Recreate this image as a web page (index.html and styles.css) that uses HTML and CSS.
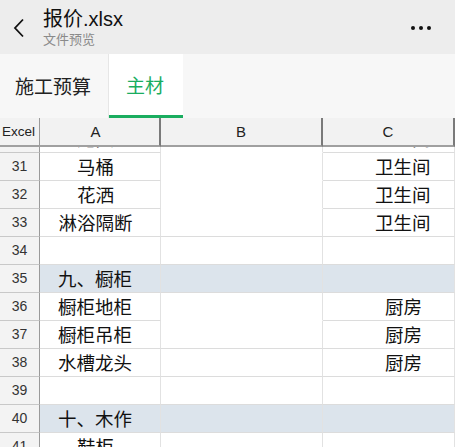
FILE: index.html
```html
<!DOCTYPE html>
<html lang="zh-CN">

<head>
    <meta charset="UTF-8">
    <meta name="viewport" content="width=device-width, initial-scale=1.0">
    <title>报价.xlsx</title>
    <link rel="stylesheet" href="styles.css">
</head>

<body>

    <!-- Top bar -->
    <header class="topbar">
        <svg class="back" width="12" height="20" viewBox="0 0 12 20">
            <path d="M10 1.5 L2 10 L10 18.5" fill="none" stroke="#111" stroke-width="1.8" />
        </svg>
        <div class="titles">
            <div class="title">报价.xlsx</div>
            <div class="subtitle">文件预览</div>
        </div>
        <div class="more"><span></span><span></span><span></span></div>
    </header>

    <!-- Sheet tabs -->
    <nav class="tabs">
        <div class="tab">施工预算</div>
        <div class="tab active">主材</div>
    </nav>

    <!-- Sheet -->
    <div class="sheet">
        <div class="row head">
            <div class="num">Excel</div>
            <div class="cell col-a">A</div>
            <div class="cell col-b">B</div>
            <div class="cell col-c">C</div>
        </div>
        <div class="rows">
            <!-- row 30 is scrolled mostly out of view -->
            <div class="row first">
                <div class="num"></div>
                <div class="cell center"><span class="peek">龙头</span></div>
                <div class="cell merged"></div>
                <div class="cell right"><span class="peek">卫生间</span></div>
            </div>
            <div class="row">
                <div class="num">31</div>
                <div class="cell center">马桶</div>
                <div class="cell merged"></div>
                <div class="cell right">卫生间</div>
            </div>
            <div class="row">
                <div class="num">32</div>
                <div class="cell center">花洒</div>
                <div class="cell merged"></div>
                <div class="cell right">卫生间</div>
            </div>
            <div class="row">
                <div class="num">33</div>
                <div class="cell center">淋浴隔断</div>
                <div class="cell"></div>
                <div class="cell right">卫生间</div>
            </div>
            <div class="row">
                <div class="num">34</div>
                <div class="cell"></div>
                <div class="cell"></div>
                <div class="cell"></div>
            </div>
            <div class="row group">
                <div class="num">35</div>
                <div class="cell left">九、橱柜</div>
                <div class="cell"></div>
                <div class="cell"></div>
            </div>
            <div class="row">
                <div class="num">36</div>
                <div class="cell left">橱柜地柜</div>
                <div class="cell merged"></div>
                <div class="cell kitchen">厨房</div>
            </div>
            <div class="row">
                <div class="num">37</div>
                <div class="cell left">橱柜吊柜</div>
                <div class="cell"></div>
                <div class="cell kitchen">厨房</div>
            </div>
            <div class="row">
                <div class="num">38</div>
                <div class="cell left">水槽龙头</div>
                <div class="cell"></div>
                <div class="cell kitchen">厨房</div>
            </div>
            <div class="row">
                <div class="num">39</div>
                <div class="cell"></div>
                <div class="cell"></div>
                <div class="cell"></div>
            </div>
            <div class="row group">
                <div class="num">40</div>
                <div class="cell left">十、木作</div>
                <div class="cell"></div>
                <div class="cell"></div>
            </div>
            <div class="row">
                <div class="num">41</div>
                <div class="cell center">鞋柜</div>
                <div class="cell"></div>
                <div class="cell"></div>
            </div>
        </div>
    </div>

</body>

</html>
```

FILE: styles.css
```css
/* Global */
body {
    margin: 0;
    width: 455px;
    height: 447px;
    overflow: hidden;
    font-family: 'Liberation Sans', 'Noto Sans CJK SC', sans-serif;
    color: #111;
    background-color: #fff;
    display: flex;
    flex-direction: column;
}

/* Top bar */
.topbar {
    height: 54px;
    background-color: #ededed;
    display: flex;
    align-items: center;
    padding: 0 24px 0 13px;
    flex-shrink: 0;
}

.back {
    margin-top: 2px;
}

.titles {
    flex: 1;
    margin-left: 18px;
    margin-top: 1px;
}

.title {
    font-size: 20px;
    line-height: 24px;
    color: #111;
}

.subtitle {
    font-size: 13px;
    line-height: 16px;
    color: #8a8a8a;
    margin-top: 1px;
}

.more {
    display: flex;
    gap: 4px;
    margin-top: 1px;
}

.more span {
    width: 4px;
    height: 4px;
    border-radius: 50%;
    background-color: #111;
}

/* Tabs */
.tabs {
    height: 64px;
    background-color: #f7f7f7;
    display: flex;
    flex-shrink: 0;
}

.tab {
    padding: 0 17px 0 15px;
    font-size: 19px;
    line-height: 64px;
    font-family: 'Noto Sans CJK SC', sans-serif;
    color: #222;
    border-right: 1px solid #e6e6e6;
}

.tab.active {
    background-color: #fff;
    color: #1aad5f;
    padding: 0 17px;
    box-sizing: border-box;
    width: 74px;
    border-right: none;
    box-shadow: inset 0 -3px 0 #1aad5f;
    line-height: 62px;
}

/* Sheet */
.sheet {
    flex: 1;
    display: flex;
    flex-direction: column;
    overflow: hidden;
}

.row {
    display: grid;
    grid-template-columns: 40px 121px 162px 132px;
    height: 28px;
}

.rows {
    overflow: hidden;
    flex: 1;
}

.num {
    background-color: #f3f3f3;
    border-right: 1px solid #9a9a9a;
    border-bottom: 1px solid #c8c8c8;
    font-size: 14px;
    color: #333;
    text-align: center;
    line-height: 27px;
}

.cell {
    border-right: 1px solid #e2e2e2;
    border-bottom: 1px solid #dcdcdc;
    font-family: 'Noto Sans CJK SC', sans-serif;
    font-size: 18.5px;
    line-height: 27px;
    white-space: nowrap;
    overflow: hidden;
}

/* partially visible row at the top of the scroll */
.row.first {
    height: 6px;
}

.row.first .cell {
    line-height: 5px;
    height: 5px;
}

.peek {
    display: block;
    line-height: 27px;
    margin-top: -22px;
}

.cell.merged {
    border-bottom-color: transparent;
}

.cell.center {
    text-align: center;
    padding-right: 9px;
}

.cell.left {
    padding-left: 18px;
}

.cell.right {
    padding-left: 52px;
}

.cell.kitchen {
    padding-left: 62px;
}

.row.group .cell {
    background-color: #dce4ec;
}

/* Column header */
.row.head {
    height: 29px;
    flex-shrink: 0;
}

.row.head .num,
.row.head .cell {
    background-color: #f2f2f2;
    border-bottom: 2px solid #a0a0a0;
    line-height: 27px;
    font-family: 'Liberation Sans', sans-serif;
    font-size: 15px;
    color: #222;
    text-align: center;
}

.row.head .num {
    font-size: 13.5px;
    text-align: left;
    padding-left: 2px;
    border-right: 1px solid #9a9a9a;
}

.row.head .cell {
    border-right: 2px solid #7a7a7a;
}

.row.head .col-a {
    padding-right: 8px;
}
```
